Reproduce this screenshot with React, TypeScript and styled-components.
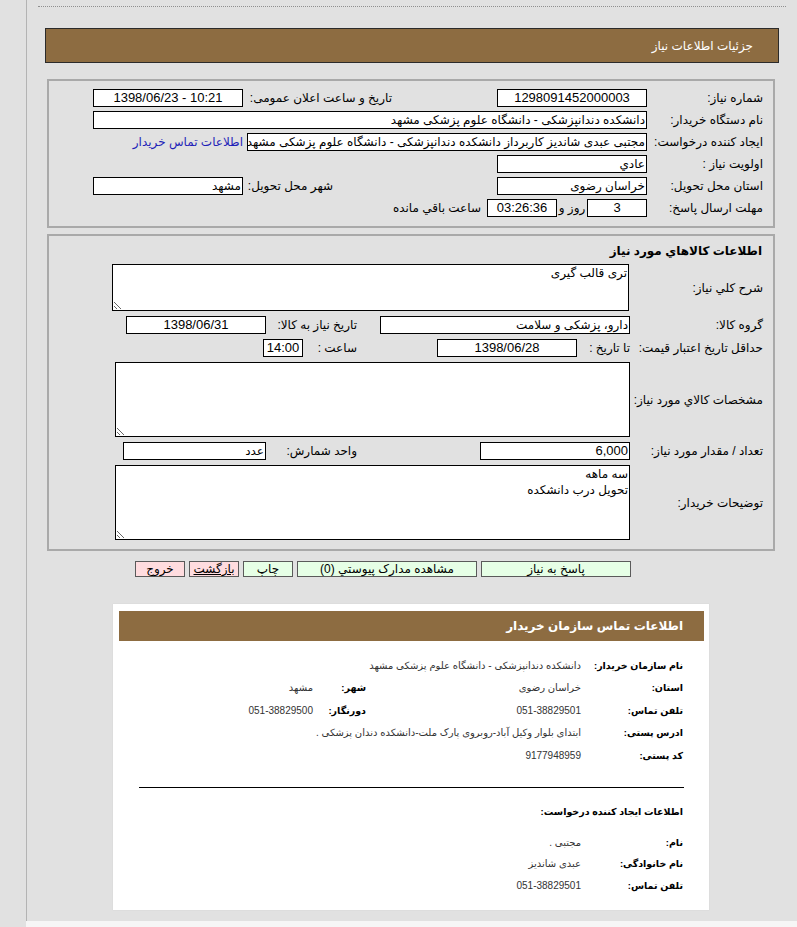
import React from 'react';
import styled, { createGlobalStyle } from 'styled-components';

const GlobalStyle = createGlobalStyle`
  html, body {
    margin: 0;
    padding: 0;
    background: #e1e1e1;
  }
  body {
    font-family: "Liberation Sans", "DejaVu Sans", sans-serif;
    font-size: 12px;
    color: #000;
  }
`;

const brown = '#8d6c41';

const App = () => {
  return (
    <>
      <GlobalStyle />
      <Shell>
        <Main>
          <DottedRule />
          <HeaderBar>جزئیات اطلاعات نیاز</HeaderBar>

          <Box>
            <Rows $gap={4}>
              <Row>
                <Label $w={116}>شماره نیاز:</Label>
                <Field $w={150} $center $num>1298091452000003</Field>
                <Label $w={254} $pr={105}>تاریخ و ساعت اعلان عمومی:</Label>
                <Field $w={150} $center $num $ltr>1398/06/23 - 10:21</Field>
              </Row>
              <Row>
                <Label $w={116}>نام دستگاه خریدار:</Label>
                <Field $w={554}>دانشکده دندانپزشکی - دانشگاه علوم پزشکی مشهد</Field>
              </Row>
              <Row>
                <Label $w={116}>ایجاد کننده درخواست:</Label>
                <Field $w={400}>مجتبی عبدی شاندیز کاربرداز دانشکده دندانپزشکی - دانشگاه علوم پزشکی مشهد</Field>
                <ContactLink href="#">اطلاعات تماس خریدار</ContactLink>
              </Row>
              <Row>
                <Label $w={116}>اولویت نیاز :</Label>
                <Field $w={150}>عادي</Field>
              </Row>
              <Row>
                <Label $w={116}>استان محل تحویل:</Label>
                <Field $w={150}>خراسان رضوی</Field>
                <Label $w={254} $pr={164}>شهر محل تحویل:</Label>
                <Field $w={150}>مشهد</Field>
              </Row>
              <Row>
                <Label $w={116}>مهلت ارسال پاسخ:</Label>
                <Field $w={60} $center $num>3</Field>
                <Inline $w={30} $center>روز و</Inline>
                <Field $w={70} $center $num>03:26:36</Field>
                <Inline $pr={6}>ساعت باقي مانده</Inline>
              </Row>
            </Rows>
          </Box>

          <Box $second>
            <BoxTitle>اطلاعات کالاهاي مورد نیاز</BoxTitle>
            <Rows $gap={5}>
              <Row $auto>
                <Label $w={134}>شرح کلي نیاز:</Label>
                <Area $w={517} $h={47} readOnly value="تری قالب گیری" />
              </Row>
              <Row>
                <Label $w={133}>گروه کالا:</Label>
                <Field $w={250}>دارو، پزشکی و سلامت</Field>
                <Label $w={114} $pr={23}>تاریخ نیاز به کالا:</Label>
                <Field $w={140} $center $num>1398/06/31</Field>
              </Row>
              <Row>
                <Label $w={133}>حداقل تاریخ اعتبار قیمت:</Label>
                <Inline $w={53}>تا تاریخ :</Inline>
                <Field $w={140} $center $num>1398/06/28</Field>
                <Label $w={134} $pr={80}>ساعت :</Label>
                <Field $w={40} $center $num>14:00</Field>
              </Row>
              <Row $auto>
                <Label $w={133}>مشخصات کالاي مورد نیاز:</Label>
                <Area $w={515} $h={75} readOnly value="" />
              </Row>
              <Row>
                <Label $w={133}>تعداد / مقدار مورد نیاز:</Label>
                <Field $w={150} $num>6,000</Field>
                <Label $w={214} $pr={123}>واحد شمارش:</Label>
                <Field $w={143}>عدد</Field>
              </Row>
              <Row $auto>
                <Label $w={133}>توضیحات خریدار:</Label>
                <Area $w={515} $h={75} readOnly value={'سه ماهه\nتحویل درب دانشکده'} />
              </Row>
            </Rows>
          </Box>

          <ButtonBar>
            <Button $w={150} $tone="green">پاسخ به نیاز</Button>
            <Button $w={180} $tone="green">مشاهده مدارک پیوستي (0)</Button>
            <Button $w={50} $tone="green">چاپ</Button>
            <Button $w={50} $tone="pink" $underline>بازگشت</Button>
            <Button $w={50} $tone="pink">خروج</Button>
          </ButtonBar>

          <Panel>
            <PanelHeader>اطلاعات تماس سازمان خریدار</PanelHeader>
            <ContactGrid $pitch={22.5} $top={13}>
              <CLabel>نام سازمان خریدار:</CLabel>
              <CValue $span>دانشکده دندانپزشکی - دانشگاه علوم پزشکی مشهد</CValue>
              <CLabel>استان:</CLabel>
              <CValue>خراسان رضوی</CValue>
              <CLabel>شهر:</CLabel>
              <CValue>مشهد</CValue>
              <CLabel>تلفن تماس:</CLabel>
              <CValue>051-38829501</CValue>
              <CLabel>دورنگار:</CLabel>
              <CValue>051-38829500</CValue>
              <CLabel>ادرس پستی:</CLabel>
              <CValue $span>ابتدای بلوار وکیل آباد-روبروی پارک ملت-دانشکده دندان پزشکی .</CValue>
              <CLabel>کد پستی:</CLabel>
              <CValue $span>9177948959</CValue>
            </ContactGrid>
            <Divider />
            <SectionTitle>اطلاعات ایجاد کننده درخواست:</SectionTitle>
            <ContactGrid $pitch={21.5} $top={9}>
              <CLabel>نام:</CLabel>
              <CValue $span>مجتبی .</CValue>
              <CLabel>نام خانوادگی:</CLabel>
              <CValue $span>عبدی شاندیز</CValue>
              <CLabel>تلفن تماس:</CLabel>
              <CValue $span>051-38829501</CValue>
            </ContactGrid>
          </Panel>
        </Main>
        <BottomStrip />
      </Shell>
    </>
  );
};

export default App;

const Shell = styled.div`
  padding-left: 26px;
  background: #e1e1e1;
`;

const Main = styled.div`
  direction: rtl;
  height: 921px;
  box-sizing: border-box;
  padding-top: 6px;
  border-left: 1px solid #b3b3b3;
  overflow: hidden;
`;

const BottomStrip = styled.div`
  height: 6px;
  background: #f6f6f6;
`;

const DottedRule = styled.div`
  margin: 0 11px;
  border-top: 1px dotted #8f8f8f;
`;

const HeaderBar = styled.div`
  display: flex;
  align-items: center;
  height: 35px;
  box-sizing: border-box;
  margin: 21px 18px 0 18px;
  padding-right: 25px;
  background: ${brown};
  border: 1px solid #2b2b2b;
  color: #fff;
  font-size: 12px;
`;

const Box = styled.div<{ $second?: boolean }>`
  margin: ${(p) => (p.$second ? '6px' : '16px')} 22px 0 20px;
  height: ${(p) => (p.$second ? '317px' : '149px')};
  box-sizing: border-box;
  padding: ${(p) => (p.$second ? '5px' : '8px')} 10px 0 0;
  border: 2px solid #a9a9a9;
`;

const BoxTitle = styled.div`
  height: 20px;
  line-height: 20px;
  margin-bottom: 3px;
  font-weight: bold;
  font-size: 12px;
  padding-right: 1px;
`;

const Rows = styled.div<{ $gap: number }>`
  display: flex;
  flex-direction: column;
  gap: ${(p) => p.$gap}px;
`;

const Row = styled.div<{ $auto?: boolean }>`
  display: flex;
  align-items: center;
  height: ${(p) => (p.$auto ? 'auto' : '18px')};
`;

const Label = styled.span<{ $w: number; $pr?: number }>`
  flex-shrink: 0;
  width: ${(p) => p.$w}px;
  box-sizing: border-box;
  padding-right: ${(p) => p.$pr ?? 0}px;
  text-align: right;
  white-space: nowrap;
  font-size: 12px;
`;

const Inline = styled.span<{ $w?: number; $center?: boolean; $pr?: number }>`
  flex-shrink: 0;
  width: ${(p) => (p.$w ? `${p.$w}px` : 'auto')};
  padding-right: ${(p) => p.$pr ?? 0}px;
  text-align: ${(p) => (p.$center ? 'center' : 'right')};
  white-space: nowrap;
  font-size: 12px;
`;

const Field = styled.div<{ $w: number; $center?: boolean; $num?: boolean; $ltr?: boolean }>`
  flex-shrink: 0;
  width: ${(p) => p.$w}px;
  height: 18px;
  box-sizing: border-box;
  padding: 0 1px;
  background: #fff;
  border: 1px solid #000;
  line-height: 16px;
  font-size: ${(p) => (p.$num ? '13px' : '12px')};
  direction: ${(p) => (p.$ltr ? 'ltr' : 'rtl')};
  text-align: ${(p) => (p.$center ? 'center' : 'right')};
  white-space: nowrap;
  overflow: hidden;
`;

const Area = styled.textarea<{ $w: number; $h: number }>`
  flex-shrink: 0;
  width: ${(p) => p.$w}px;
  height: ${(p) => p.$h}px;
  box-sizing: border-box;
  margin: 0;
  padding: 0 1px;
  background: #fff;
  border: 1px solid #000;
  border-radius: 0;
  font-family: "Liberation Sans", "DejaVu Sans", sans-serif;
  font-size: 12px;
  line-height: 16px;
  color: #000;
  resize: both;
  overflow: hidden;
  outline: none;
`;

const ContactLink = styled.a`
  margin-right: 4px;
  color: #1f1fb8;
  text-decoration: none;
  white-space: nowrap;
  font-size: 12px;
`;

const ButtonBar = styled.div`
  display: flex;
  gap: 4px;
  margin-top: 10px;
  padding-right: 166px;
`;

const Button = styled.button<{ $w: number; $tone: 'green' | 'pink'; $underline?: boolean }>`
  width: ${(p) => p.$w}px;
  height: 16px;
  box-sizing: border-box;
  padding: 0;
  border: 1px solid #5a5a5a;
  border-radius: 0;
  background: ${(p) => (p.$tone === 'green' ? '#e6ffe6' : '#ffdcdf')};
  font-family: "Liberation Sans", "DejaVu Sans", sans-serif;
  font-size: 12px;
  line-height: 14px;
  color: #000;
  text-decoration: ${(p) => (p.$underline ? 'underline' : 'none')};
  cursor: pointer;
`;

const Panel = styled.div`
  height: 306px;
  box-sizing: border-box;
  margin: 27px 88px 0 86px;
  padding: 7px 5px 0 6px;
  background: #fff;
  box-shadow: 0 0 1px #c8c8c8;
`;

const PanelHeader = styled.div`
  display: flex;
  align-items: center;
  height: 30px;
  padding-right: 21px;
  background: ${brown};
  color: #fff;
  font-weight: bold;
  font-size: 12px;
`;

const ContactGrid = styled.div<{ $pitch: number; $top: number }>`
  display: grid;
  grid-template-columns: 102px 215px 53px 1fr;
  grid-auto-rows: ${(p) => p.$pitch}px;
  align-items: center;
  margin: ${(p) => p.$top}px 21px 0 20px;
`;

const CLabel = styled.span`
  font-weight: bold;
  font-size: 9.5px;
  white-space: nowrap;
`;

const CValue = styled.span<{ $span?: boolean }>`
  grid-column: ${(p) => (p.$span ? 'span 3' : 'span 1')};
  font-size: 10px;
  color: #333;
  white-space: nowrap;
`;

const Divider = styled.div`
  height: 1px;
  margin: 20px 20px 0 20px;
  background: #000;
`;

const SectionTitle = styled.div`
  height: 22px;
  line-height: 22px;
  margin: 13px 21px 0 0;
  font-weight: bold;
  font-size: 9.5px;
`;
